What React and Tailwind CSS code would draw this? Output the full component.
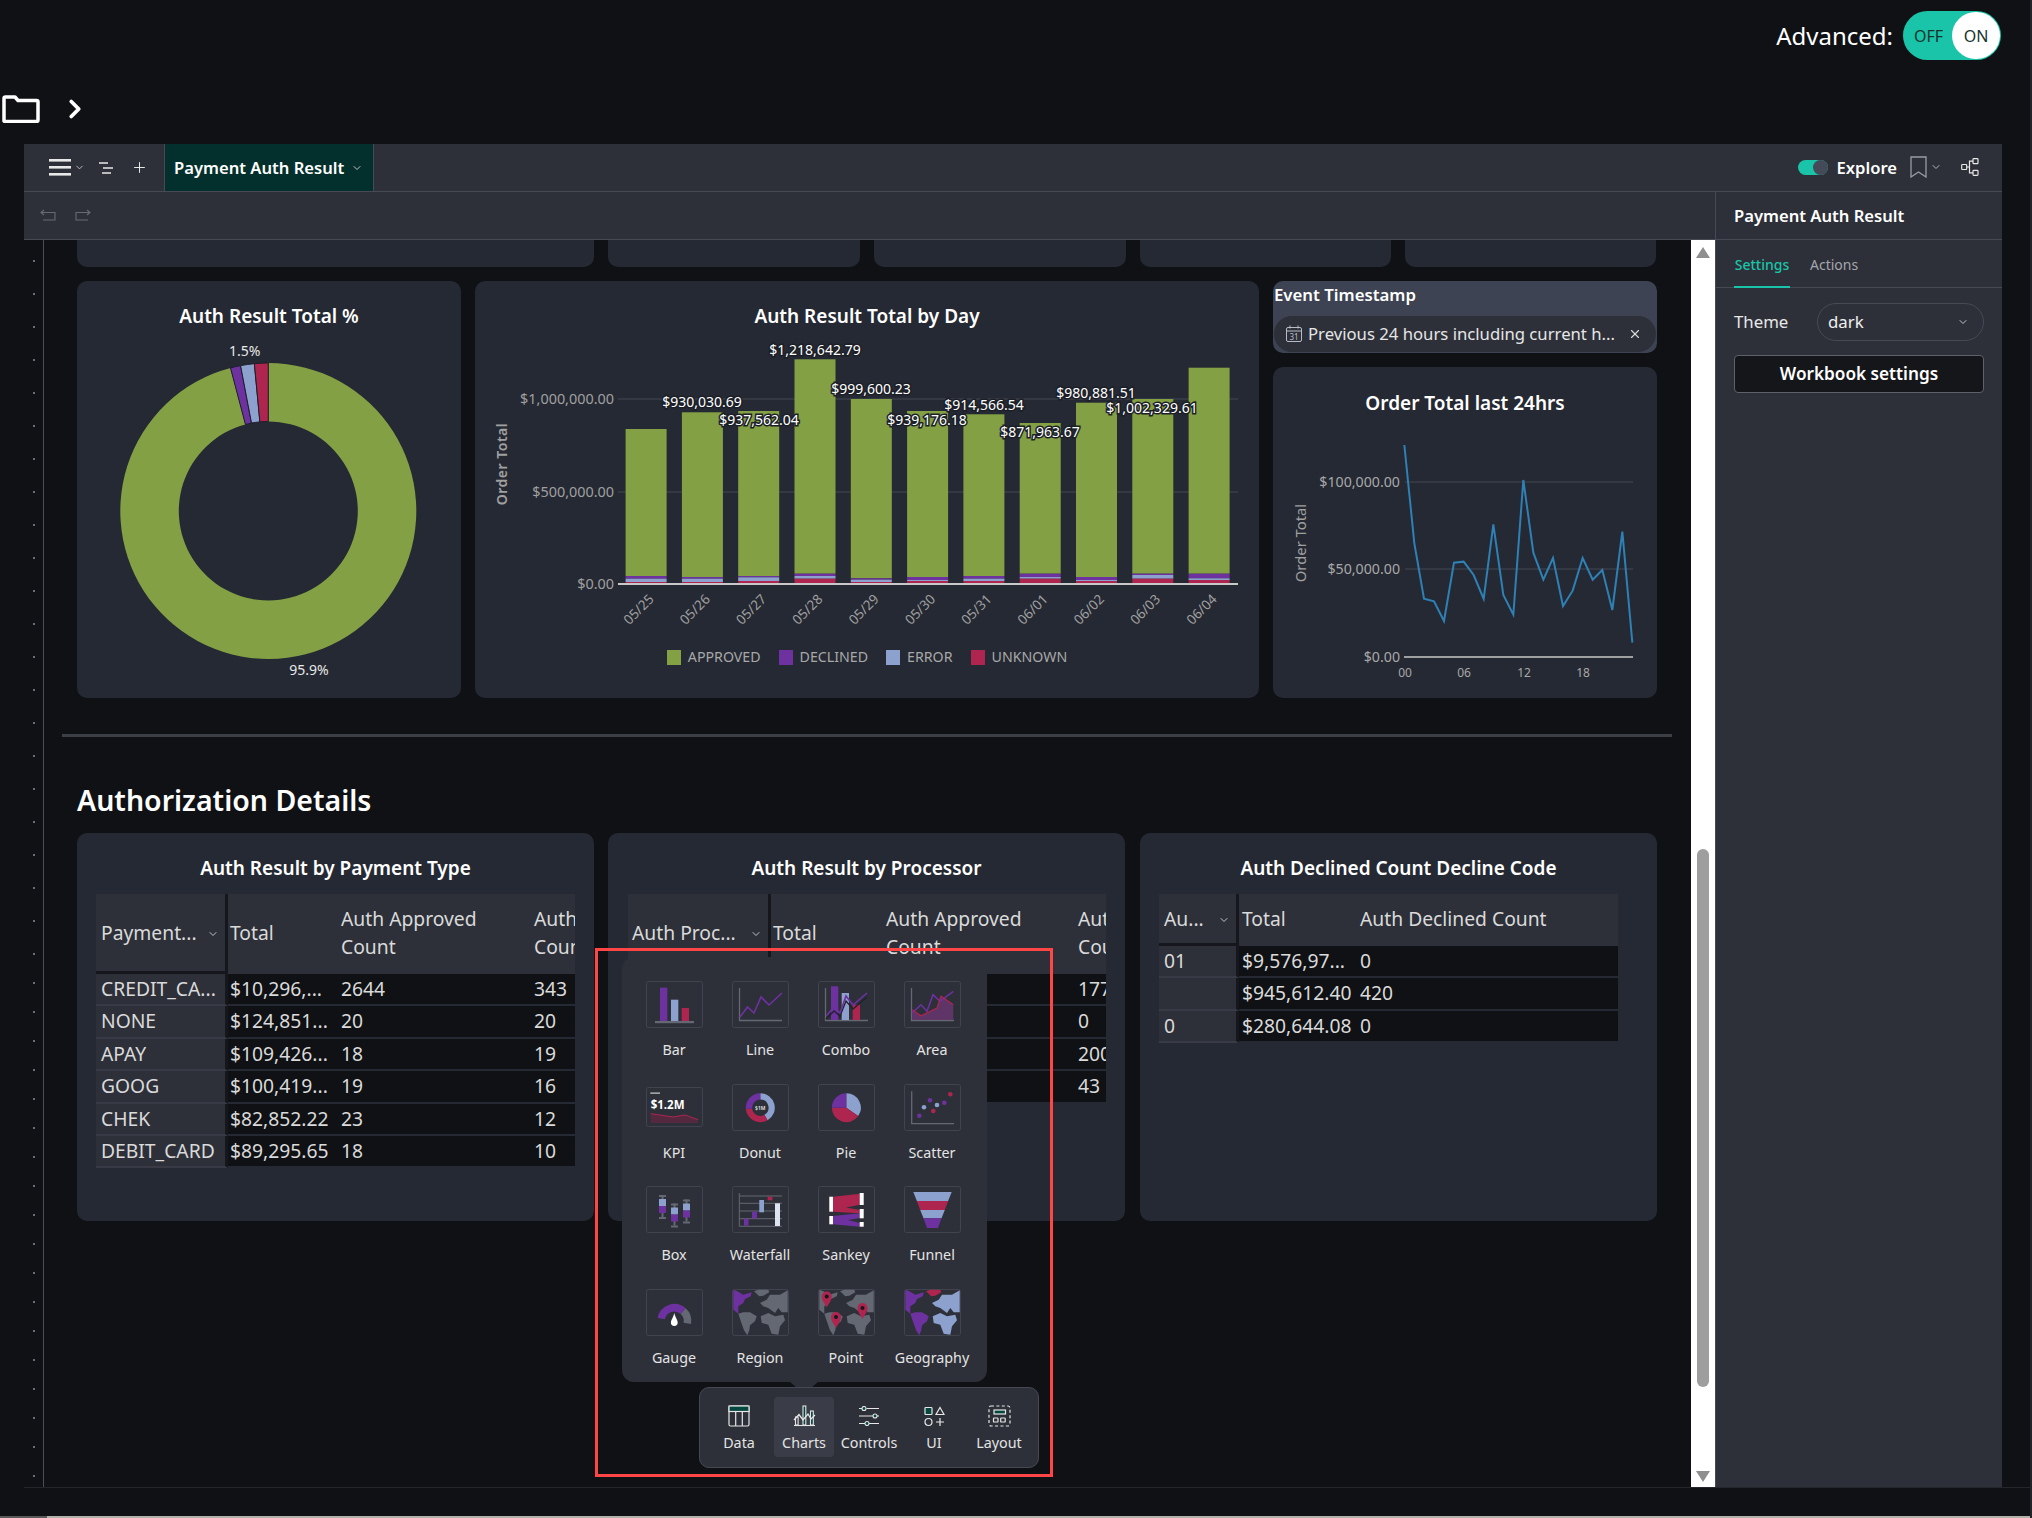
import { ChevronDown, ChevronRight, Plus, X } from 'lucide-react';

const GREEN = '#83a045', PURPLE = '#6e31a0', BLUE = '#8da1cf', RED = '#ae254f', GREY = '#646873';

const BARS = [
  { day: '05/25', top: 429, s: [576, 578.7, 582] },
  { day: '05/26', top: 412.3, s: [577, 578.7, 582] },
  { day: '05/27', top: 411, s: [576, 577.3, 581] },
  { day: '05/28', top: 359.3, s: [573.7, 576, 578.7] },
  { day: '05/29', top: 399, s: [578.3, 579.7, 582] },
  { day: '05/30', top: 411, s: [577, 580, 581] },
  { day: '05/31', top: 414.3, s: [576, 578.7, 581] },
  { day: '06/01', top: 423, s: [573.7, 577, 578.7] },
  { day: '06/02', top: 402.7, s: [577, 580, 581] },
  { day: '06/03', top: 399, s: [573.7, 575, 578.7] },
  { day: '06/04', top: 367.7, s: [573.7, 578.3, 580] },
];

const BAR_LABELS = [
  ['$930,030.69', 702, 402.3], ['$937,562.04', 759, 420.3], ['$1,218,642.79', 815, 350],
  ['$999,600.23', 871, 389], ['$939,176.18', 927, 420.3], ['$914,566.54', 984, 405.3],
  ['$871,963.67', 1040, 432.3], ['$980,881.51', 1096, 393.3], ['$1,002,329.61', 1152, 408.3],
];

const LINE_POINTS = [
  [433, 525], [463, 820], [492, 986], [522, 994], [552, 1053], [582, 878], [611, 875], [641, 915],
  [671, 987], [700, 763], [730, 975], [760, 1034], [790, 630], [820, 848], [850, 929], [879, 864],
  [909, 1008], [938, 962], [968, 864], [998, 929], [1027, 900], [1057, 1020], [1087, 785], [1117, 1118],
].map(([x, y]) => `${1260 + x / 3},${270 + y / 3}`).join(' ');

const polar = (cx, cy, r, deg) => {
  const a = ((deg - 90) * Math.PI) / 180;
  return [cx + r * Math.cos(a), cy + r * Math.sin(a)];
};

// ring slice, angles clockwise from 12 o'clock
const ringSlice = (cx, cy, r1, r2, from, to) => {
  const [ax, ay] = polar(cx, cy, r2, from);
  const [bx, by] = polar(cx, cy, r2, to);
  const [cx2, cy2] = polar(cx, cy, r1, to);
  const [dx, dy] = polar(cx, cy, r1, from);
  const big = to - from > 180 ? 1 : 0;
  return `M${ax} ${ay}A${r2} ${r2} 0 ${big} 1 ${bx} ${by}L${cx2} ${cy2}A${r1} ${r1} 0 ${big} 0 ${dx} ${dy}Z`;
};

const Card = ({ className = '', children }) => (
  <div className={`rounded-[10px] bg-[#252933] ${className}`}>{children}</div>
);

const Title = ({ children }) => (
  <h3 className="text-center text-[19px] leading-6 font-semibold text-white">{children}</h3>
);

const DonutCard = () => (
  <Card className="h-[417px] w-[384px] pt-[23px]">
    <Title>Auth Result Total %</Title>
    <svg viewBox="77 328 384 370" className="block h-[370px] w-[384px]">
      <path d={ringSlice(268.3, 511, 89.5, 148, 0, 345.2)} fill={GREEN} />
      <path d={ringSlice(268.3, 511, 89.5, 148, 345.2, 349.2)} fill={PURPLE} stroke="#1c1f27" />
      <path d={ringSlice(268.3, 511, 89.5, 148, 349.2, 354.6)} fill={BLUE} stroke="#1c1f27" />
      <path d={ringSlice(268.3, 511, 89.5, 148, 354.6, 360)} fill={RED} stroke="#1c1f27" />
      <text x="244.6" y="356" textAnchor="middle" fontSize="14" fill="#e8e8e8">1.5%</text>
      <text x="309" y="675" textAnchor="middle" fontSize="14" fill="#e8e8e8">95.9%</text>
    </svg>
  </Card>
);

const LegendItem = ({ color, label }) => (
  <div className="flex items-center gap-[7px]">
    <span className="h-[15px] w-[14px]" style={{ background: color }} />
    <span className="text-[14.2px] leading-4 text-[#a8a8a8]">{label}</span>
  </div>
);

const BarCard = () => (
  <Card className="h-[417px] w-[784px] pt-[23px]">
    <Title>Auth Result Total by Day</Title>
    <svg viewBox="475 328 784 320" className="block h-[320px] w-[784px]">
      <line x1="618" x2="1238" y1="399" y2="399" stroke="#3a3e49" strokeWidth="1.5" />
      <line x1="618" x2="1238" y1="492" y2="492" stroke="#3a3e49" strokeWidth="1.5" />
      {[['$1,000,000.00', 404], ['$500,000.00', 497], ['$0.00', 589]].map(([t, y]) => (
        <text key={t} x="614" y={y} textAnchor="end" fontSize="14.400" fill="#a0a0a0">{t}</text>
      ))}
      <text transform="translate(507 464) rotate(-90)" textAnchor="middle" fontSize="14" fontWeight="600" letterSpacing="0.5" fill="#a0a0a0">Order Total</text>
      {BARS.map((b, i) => {
        const x = 625.6 + i * 56.3;
        return (
          <g key={b.day}>
            <rect x={x} y={b.top} width="41" height={b.s[0] - b.top} fill={GREEN} />
            <rect x={x} y={b.s[0]} width="41" height={b.s[1] - b.s[0]} fill={PURPLE} />
            <rect x={x} y={b.s[1]} width="41" height={b.s[2] - b.s[1]} fill={BLUE} />
            <rect x={x} y={b.s[2]} width="41" height={584 - b.s[2]} fill={RED} />
            <text transform={`translate(${x + 29} 600) rotate(-45)`} textAnchor="end" fontSize="13.500" fill="#a0a0a0">{b.day}</text>
          </g>
        );
      })}
      <line x1="618" x2="1238" y1="584" y2="584" stroke="#c8c8c8" strokeWidth="2" />
      {BAR_LABELS.map(([t, x, y]) => (
        <text key={t} x={x} y={y + 5} textAnchor="middle" fontSize="14" fill="#fff" stroke="#1c1f27" strokeWidth="3" paintOrder="stroke">{t}</text>
      ))}
    </svg>
    <div className="mt-[1px] flex justify-center gap-[18px]">
      <LegendItem color={GREEN} label="APPROVED" />
      <LegendItem color={PURPLE} label="DECLINED" />
      <LegendItem color={BLUE} label="ERROR" />
      <LegendItem color={RED} label="UNKNOWN" />
    </div>
  </Card>
);

const LineCard = () => (
  <Card className="h-[331px] w-[384px] pt-6">
    <Title>Order Total last 24hrs</Title>
    <svg viewBox="1273 415 384 283" className="block h-[283px] w-[384px]">
      <line x1="1405" x2="1633" y1="482" y2="482" stroke="#3a3e49" strokeWidth="1.5" />
      <line x1="1405" x2="1633" y1="569" y2="569" stroke="#3a3e49" strokeWidth="1.5" />
      <line x1="1404" x2="1633" y1="657" y2="657" stroke="#c8c8c8" strokeWidth="1.5" />
      {[['$100,000.00', 487], ['$50,000.00', 574], ['$0.00', 662]].map(([t, y]) => (
        <text key={t} x="1400" y={y} textAnchor="end" fontSize="14.200" fill="#a8a8a8">{t}</text>
      ))}
      <text transform="translate(1306 543) rotate(-90)" textAnchor="middle" fontSize="14.800" fill="#a0a0a0">Order Total</text>
      {[['00', 1405], ['06', 1464], ['12', 1524], ['18', 1583]].map(([t, x]) => (
        <text key={t} x={x} y="677" textAnchor="middle" fontSize="12" fill="#a8a8a8">{t}</text>
      ))}
      <polyline points={LINE_POINTS} fill="none" stroke="#2e80b5" strokeWidth="2" />
    </svg>
  </Card>
);

const CalendarIcon = () => (
  <svg width="18" height="18" viewBox="0 0 18 18" fill="none" stroke="#b8bcc6" strokeWidth="1">
    <rect x="1.5" y="2.5" width="15" height="14" rx="1.5" />
    <path d="M1.5 6h15M5 .5v3M13 .5v3" />
    <text x="9" y="14.5" textAnchor="middle" fontSize="8" fill="#b8bcc6" stroke="none">31</text>
  </svg>
);

const EventCard = () => (
  <div className="h-[72px] w-[384px] rounded-[10px] bg-[#3d4352] pt-[2px]">
    <div className="pl-[1px] text-[16.8px] leading-6 font-semibold text-white">Event Timestamp</div>
    <div className="mx-[1px] mt-[9px] flex h-[36px] items-center rounded-full bg-[#2d3039] pr-[14px] pl-[11px]">
      <CalendarIcon />
      <span className="ml-[5px] flex-1 text-[16.7px] whitespace-nowrap text-[#e6e6e6]">Previous 24 hours including current h...</span>
      <X size={14} className="text-[#d8d8d8]" />
    </div>
  </div>
);

const DataTable = ({ width, headH, frozen, cols, rows }) => (
  <div className="mt-[14px] overflow-hidden text-[19.3px] text-[#dadada]" style={{ width }}>
    <div className="flex bg-[#2d3039]" style={{ height: headH }}>
      <div className="flex shrink-0 items-center justify-between border-r-[3px] border-b-[3px] border-[#15171c] pt-[2px] pr-[6px] whitespace-nowrap" style={{ width: frozen.w, paddingLeft: frozen.pl }}>
        <span>{frozen.label}</span>
        <ChevronDown size={12} className="text-[#c4c4c4]" />
      </div>
      {cols.map((c) => (
        <div key={c.label} className="flex shrink-0 items-center overflow-hidden pb-[2px] leading-7" style={{ width: c.w, paddingLeft: c.pl }}>
          <span className="block shrink-0" style={{ width: c.textW }}>{c.label}</span>
        </div>
      ))}
    </div>
    {rows.map((r, i) => (
      <div key={i} className="flex h-[32.4px] leading-[30px] whitespace-nowrap">
        <div className="shrink-0 border-r-[3px] border-b-2 border-r-[#15171c] border-b-[#383b45] bg-[#2d3039]" style={{ width: frozen.w, paddingLeft: frozen.pl }}>{r[0]}</div>
        {cols.map((c, j) => (
          <div key={c.label} className="shrink-0 overflow-hidden border-b-2 border-[#252933] bg-[#0f1115]" style={{ width: c.w, paddingLeft: c.pl }}>{r[j + 1]}</div>
        ))}
      </div>
    ))}
  </div>
);

const TABLE_ONE = [
  ['CREDIT_CA...', '$10,296,...', '2644', '343'],
  ['NONE', '$124,851...', '20', '20'],
  ['APAY', '$109,426...', '18', '19'],
  ['GOOG', '$100,419...', '19', '16'],
  ['CHEK', '$82,852.22', '23', '12'],
  ['DEBIT_CARD', '$89,295.65', '18', '10'],
];

const TABLE_TWO = [
  ['', '', '', '177'],
  ['', '', '', '0'],
  ['', '', '', '200'],
  ['', '', '', '43'],
];

const TABLE_THREE = [
  ['01', '$9,576,97...', '0'],
  ['', '$945,612.40', '420'],
  ['0', '$280,644.08', '0'],
];

const axis = 'M7.5 7v32.5H50';
const axisStroke = { stroke: GREY, strokeWidth: 1.3, fill: 'none' };

const Frame = ({ y = 0.5, h = 46, children }) => (
  <svg width="57" height="47" viewBox="0 0 57 47" className="block">
    <rect x="0.5" y={y} width="56" height={h} rx="2" fill="none" stroke="#41444e" />
    {children}
  </svg>
);

// continents are shared by the three map tiles
const MAP = {
  north: '1.3,.7 5.3,2.3 11.3,5.7 19.700,3.300 18.700,7.300 13,10 11.300,14 6.300,17.300 6.300,24.700 1.300,20.700',
  south: '6.300,24.700 11.300,23.300 18,23.300 24.700,27.300 23,32.300 18,36.300 17.300,41.300 15.300,46.300 12,41.300 9.700,34.700',
  top: '22,2.300 26.300,.7 36.300,.7 37.300,3.300 31.300,6.700 27.300,7.300 24.700,4.700',
  asia: '28,14 34.700,10.700 38,5.700 48,5.700 55.700,1.300 55.700,23.300 49.700,23.300 46.300,19 43,24 36.300,19 31.300,17.300',
  africa: '28.700,27.300 36.300,24 43,27.300 51.300,25.700 53,31.300 48,37.300 46.300,45.700 39.700,44.700 36.300,35.700 29.700,34',
};

const MapTiles = ({ colors, children }) => (
  <Frame>
    {Object.keys(MAP).map((k) => (
      <polygon key={k} points={MAP[k]} fill={colors[k]} />
    ))}
    {children}
  </Frame>
);

const Pin = ({ x, y }) => (
  <g>
    <path d={`M${x} ${y + 11}C${x - 2} ${y + 7} ${x - 5} ${y + 4} ${x - 5} ${y}A5 5 0 0 1 ${x + 5} ${y}C${x + 5} ${y + 4} ${x + 2} ${y + 7} ${x} ${y + 11}Z`} fill={RED} />
    <circle cx={x} cy={y} r="2" fill="#15171c" />
  </g>
);

const BoxPlot = ({ x, top }) => (
  <g>
    <rect x={x - 1} y={top} width="2" height="22" fill={GREY} />
    <rect x={x - 3.5} y={top} width="7" height="2" fill={GREY} />
    <rect x={x - 3.5} y={top + 22} width="7" height="2" fill={GREY} />
    <rect x={x - 3.5} y={top + 4} width="7" height="7" fill={BLUE} />
    <rect x={x - 3.5} y={top + 11} width="7" height="7" fill={PURPLE} />
  </g>
);

const CHARTS = [
  ['Bar', (
    <Frame>
      <rect x="14" y="6.7" width="7.3" height="33.3" fill={PURPLE} />
      <rect x="25" y="18.7" width="7.3" height="21.3" fill={BLUE} />
      <rect x="35.7" y="27" width="7.3" height="13" fill={RED} />
      <rect x="9" y="40" width="39" height="2.2" fill={GREY} />
    </Frame>
  )],
  ['Line', (
    <Frame>
      <path d={axis} {...axisStroke} />
      <polyline points="8,36 15.5,26 22,32 29,16 37,24 50,12" fill="none" stroke={PURPLE} strokeWidth="1.6" />
    </Frame>
  )],
  ['Combo', (
    <Frame>
      <path d={axis} {...axisStroke} />
      <rect x="13" y="5.3" width="7.3" height="33.7" fill={PURPLE} />
      <rect x="23.7" y="12" width="7.3" height="27" fill={BLUE} />
      <rect x="34.7" y="23.7" width="7.3" height="15.3" fill={RED} />
      <polyline points="8,38 16,30 22,35 28,20 35,28 49,16" fill="none" stroke="#20232b" strokeWidth="1.4" />
      <polyline points="8,35 16,26 22,32 28,15 35,24 49,12" fill="none" stroke={PURPLE} strokeWidth="1.6" />
    </Frame>
  )],
  ['Area', (
    <Frame>
      <path d={axis} {...axisStroke} />
      <polygon points="8,28.7 17,34.7 33,27 37,15.3 49.3,23.7 49.3,39 8,39" fill="#5e3566" />
      <polyline points="8,32 17,23.7 23,30.3 29,13.7 36,20.3 49.3,10.3" fill="none" stroke={PURPLE} strokeWidth="1.5" />
      <polyline points="8,28.7 17,34.7 33,27 37,15.3 49.3,23.7" fill="none" stroke={RED} strokeWidth="1.2" />
    </Frame>
  )],
  ['KPI', (
    <Frame y={3.5} h={39}>
      <rect x="4.3" y="8.3" width="9.7" height="1.7" fill="#a0a0a0" />
      <text x="4.7" y="24.5" fontSize="11.5" fontWeight="700" fill="#fff">$1.2M</text>
      <polygon points="4.7,29.7 27,33 39,31 52,35.7 52,39 4.7,39" fill="#54283e" />
      <polyline points="4.7,29.7 27,33 39,31 52,35.7" fill="none" stroke={RED} strokeWidth="1" />
    </Frame>
  )],
  ['Donut', (
    <Frame>
      <path d={ringSlice(28.3, 23.7, 8.2, 14.5, 0, 150)} fill={BLUE} />
      <path d={ringSlice(28.3, 23.7, 8.2, 14.5, 150, 265)} fill={RED} />
      <path d={ringSlice(28.3, 23.7, 8.2, 14.5, 265, 360)} fill={PURPLE} />
      <text x="28.3" y="25.5" textAnchor="middle" fontSize="5" fontWeight="600" fill="#e8e8e8">$1M</text>
    </Frame>
  )],
  ['Pie', (
    <Frame>
      <path d={`M28.3 23.7L${polar(28.3, 23.7, 14.5, 0)}A14.5 14.5 0 0 1 ${polar(28.3, 23.7, 14.5, 125)}Z`} fill={BLUE} />
      <path d={`M28.3 23.7L${polar(28.3, 23.7, 14.5, 125)}A14.5 14.5 0 0 1 ${polar(28.3, 23.7, 14.5, 270)}Z`} fill={RED} />
      <path d={`M28.3 23.7L${polar(28.3, 23.7, 14.5, 270)}A14.5 14.5 0 0 1 ${polar(28.3, 23.7, 14.5, 360)}Z`} fill={PURPLE} />
    </Frame>
  )],
  ['Scatter', (
    <Frame>
      <path d="M7.7 7.3v32.4H50" {...axisStroke} />
      {[[15.3, 31.7, PURPLE], [26, 16.3, PURPLE], [40.3, 18.7, PURPLE], [20, 23.3, BLUE], [33, 21, BLUE], [29.3, 27, RED], [46.3, 10.3, RED]].map(([x, y, c]) => (
        <circle key={x} cx={x} cy={y} r="2.3" fill={c} />
      ))}
    </Frame>
  )],
  ['Box', (
    <Frame>
      <BoxPlot x={16.5} top={9} />
      <BoxPlot x={28.5} top={17.5} />
      <BoxPlot x={40.5} top={13.5} />
    </Frame>
  )],
  ['Waterfall', (
    <Frame>
      <path d="M7.3 7v33.5M7.3 10H50M7.3 17.3H50M7.3 25H50M7.3 32.7H50M7.3 40.3H50" stroke={GREY} strokeWidth="1" fill="none" />
      <rect x="12" y="32.7" width="4.5" height="7" fill={PURPLE} />
      <rect x="20" y="25.7" width="5" height="6.6" fill={PURPLE} />
      <rect x="27.3" y="14" width="4.7" height="12.3" fill={BLUE} />
      <rect x="35.7" y="10.7" width="4.7" height="3.6" fill={RED} />
      <rect x="43" y="17.3" width="5" height="22.7" fill="#dde3f0" />
    </Frame>
  )],
  ['Sankey', (
    <Frame>
      <path d="M15 10.7L41.7 7.7V18.7L28 21.500L41.7 24V27H36L15 25.7Z" fill={RED} />
      <path d="M15 30L41.7 27.3V32L30 34L41.7 37V40.7L15 38.3Z" fill={PURPLE} />
      <g fill="#fff">
        <rect x="11.3" y="10.7" width="3.7" height="15" />
        <rect x="11.3" y="30" width="3.7" height="8.3" />
        <rect x="41.7" y="7" width="4" height="12" />
        <rect x="41.7" y="23" width="4" height="9.3" />
        <rect x="41.7" y="36" width="4" height="4.7" />
      </g>
    </Frame>
  )],
  ['Funnel', (
    <Frame>
      <polygon points="9.3,6 47.7,6 44.100,15 12.900,15" fill={BLUE} />
      <polygon points="12.900,15 44.100,15 40.800,24 16.200,24" fill={RED} />
      <polygon points="16.200,24 40.800,24 37.500,32.300 19.500,32.300" fill={BLUE} />
      <polygon points="19.500,32.300 37.500,32.300 34,42 23,42" fill={PURPLE} />
    </Frame>
  )],
  ['Gauge', (
    <Frame>
      <path d={ringSlice(28.3, 32, 9.5, 17, -80, 42)} fill={PURPLE} />
      <path d={ringSlice(28.3, 32, 9.5, 17, 42, 100)} fill={GREY} />
      <path d="M28.3 24C29.5 29 31.7 31 31.7 33.6A3.4 3.4 0 0 1 24.9 33.6C24.9 31 27.1 29 28.3 24Z" fill="#fff" />
    </Frame>
  )],
  ['Region', <MapTiles colors={{ north: PURPLE, south: GREY, top: GREY, asia: GREY, africa: GREY }} />],
  ['Point', (
    <MapTiles colors={{ north: GREY, south: GREY, top: GREY, asia: GREY, africa: GREY }}>
      <Pin x={8.7} y={7.5} />
      <Pin x={18} y={28} />
      <Pin x={44.5} y={19} />
    </MapTiles>
  )],
  ['Geography', <MapTiles colors={{ north: PURPLE, south: PURPLE, top: RED, asia: BLUE, africa: BLUE }} />],
];

const DOCK_TEAL = '#05483f';

const DOCK = [
  ['Data', (
    <svg width="22" height="22" viewBox="0 0 22 22" fill="none" stroke="#e6e6e6" strokeWidth="1.2">
      <rect x="1" y="1" width="20" height="20" rx="1.5" />
      <rect x="1" y="1" width="20" height="5.5" fill={DOCK_TEAL} />
      <path d="M7.7 6.5V21M14.3 6.5V21" />
    </svg>
  )],
  ['Charts', (
    <svg width="23" height="22" viewBox="0 0 23 22" fill="none" stroke="#e6e6e6" strokeWidth="1.1">
      <path d="M1 20.5h21" />
      <rect x="2.5" y="12" width="2.6" height="8" />
      <rect x="10" y="1" width="2.8" height="19" fill={DOCK_TEAL} />
      <rect x="17.5" y="6" width="2.8" height="14" fill={DOCK_TEAL} />
      <polyline points="1,15 6,9.5 10,15 15,9 18,14 22,10" strokeWidth="1.3" />
    </svg>
  )],
  ['Controls', (
    <svg width="20" height="20" viewBox="0 0 20 20" fill="none" stroke="#e6e6e6" strokeWidth="1.1">
      <path d="M0 2.5h3M7.5 2.5h12.5M0 10h14M18 10h2M0 17.5h6M10 17.5h10" />
      <circle cx="5" cy="2.5" r="2" fill={DOCK_TEAL} />
      <circle cx="16" cy="10" r="2" fill={DOCK_TEAL} />
      <circle cx="8" cy="17.5" r="2" fill={DOCK_TEAL} />
    </svg>
  )],
  ['UI', (
    <svg width="21" height="21" viewBox="0 0 21 21" fill="none" stroke="#e6e6e6" strokeWidth="1.2">
      <rect x="1" y="1.5" width="7" height="7" rx="0.8" fill={DOCK_TEAL} />
      <path d="M16 1.5L20 8.5H12Z" />
      <circle cx="4.5" cy="16" r="3.5" />
      <path d="M16 12v8M12 16h8" />
    </svg>
  )],
  ['Layout', (
    <svg width="23" height="22" viewBox="0 0 23 22" fill="none" stroke="#e6e6e6" strokeWidth="1.2">
      <rect x="1" y="1" width="21" height="20" rx="2" strokeDasharray="3 2.4" />
      <rect x="6" y="5" width="11.5" height="4" fill={DOCK_TEAL} />
      <rect x="5.5" y="13" width="4.5" height="4" rx="0.6" />
      <rect x="12.7" y="13" width="4.5" height="4" rx="0.6" />
    </svg>
  )],
];

const Popover = () => (
  <div className="absolute top-[957px] left-[622px] h-[425px] w-[365px] rounded-xl bg-[#2d3039] pt-6 pl-[9px]">
    <div className="grid grid-cols-[repeat(4,86px)] auto-rows-[102.67px]">
      {CHARTS.map(([label, icon]) => (
        <div key={label} className="flex flex-col items-center">
          {icon}
          <span className="mt-[14px] text-[14.3px] leading-4 whitespace-nowrap text-[#e4e4e4]">{label}</span>
        </div>
      ))}
    </div>
  </div>
);

const Dock = () => (
  <div className="absolute top-[1387px] left-[699px] flex h-[81px] w-[340px] gap-[5px] rounded-[10px] border border-[#464954] bg-[#2d3039] pt-[9px] pl-[9px]">
    {DOCK.map(([label, icon]) => (
      <div key={label} className={`flex h-[60px] w-[60px] flex-col items-center rounded pt-2 ${label === 'Charts' ? 'bg-[#3a3d47]' : ''}`}>
        <div className="flex h-[22px] items-center">{icon}</div>
        <span className="mt-2 text-[14.3px] leading-4 whitespace-nowrap text-[#e4e4e4]">{label}</span>
      </div>
    ))}
  </div>
);

const FolderIcon = () => (
  <svg width="38" height="28" viewBox="0 0 38 28" fill="none" stroke="#fff" strokeWidth="3.500">
    <path d="M2 26V3.5C2 2.5 2.5 2 3.5 2H13L16 5.5H34.5C35.5 5.5 36 6 36 7V25C36 26 35.500 26.500 34.5 26.500H3.500C2.500 26.500 2 26 2 26Z" strokeLinejoin="round" />
  </svg>
);

const Toolbar = () => (
  <div className="flex h-12 items-center border-b border-[#474a55] bg-[#2d3039]">
    <div className="flex h-full w-[140px] shrink-0 items-center pl-[25px] text-[#e8e8e8]">
      <svg width="22" height="17" viewBox="0 0 22 17" fill="#e8e8e8">
        <rect width="22" height="2.6" />
        <rect y="7" width="22" height="2.600" />
        <rect y="14" width="22" height="2.600" />
      </svg>
      <ChevronDown size={11} className="ml-[3px] text-[#c4c4c4]" />
      <svg width="14" height="12" viewBox="0 0 14 12" fill="none" stroke="#e8e8e8" strokeWidth="1.3" className="ml-[14px]">
        <path d="M0 1h9M4 6h10M3 11h9" />
      </svg>
      <Plus size={17} strokeWidth={1.4} className="ml-[18px]" />
    </div>
    <div className="flex h-full w-[210px] items-center justify-between border-x border-[#474a55] bg-[#03302c] pr-[10px] pl-[9px]">
      <span className="pt-[2px] text-[16.6px] font-semibold whitespace-nowrap text-white">Payment Auth Result</span>
      <ChevronDown size={12} className="text-[#c4c4c4]" />
    </div>
    <div className="ml-auto flex items-center pr-[23px]">
      <div className="flex h-[15px] w-[30px] items-center justify-end rounded-full bg-[#1ac4a8]">
        <span className="h-[15px] w-[15px] rounded-full bg-[#454a58]" />
      </div>
      <span className="ml-[9px] pt-[2px] text-[16.6px] font-semibold text-white">Explore</span>
      <svg width="17" height="22" viewBox="0 0 17 22" fill="none" stroke="#9a9ca3" strokeWidth="1.3" className="ml-[13px]">
        <path d="M1 1h15v20l-7.500-5L1 21Z" />
      </svg>
      <ChevronDown size={12} className="ml-[3px] text-[#b4b4b4]" />
      <svg width="18" height="18" viewBox="0 0 18 18" fill="none" stroke="#e8e8e8" strokeWidth="1.200" className="ml-[19px]">
        <rect x="0.700" y="6.500" width="5" height="5" rx="0.800" />
        <rect x="12" y="0.700" width="5" height="5" rx="0.800" />
        <rect x="12" y="12.300" width="5" height="5" rx="0.800" />
        <path d="M5.700 9H8.500V3.200H12M8.500 9V14.800H12" />
      </svg>
    </div>
  </div>
);

const Ruler = () => (
  <div className="w-5 shrink-0 border-r border-[#4a4d57] pt-[20px] pl-[9px]">
    <div className="flex flex-col gap-[31px]">
      {Array.from({ length: 22 }, (_, i) => <span key={i} className="h-[2px] w-[2px] bg-[#6a6d78]" />)}
    </div>
    <div className="mt-[27px] flex flex-col gap-[27px]">
      {Array.from({ length: 18 }, (_, i) => <span key={i} className="h-[2px] w-[2px] bg-[#6a6d78]" />)}
    </div>
  </div>
);

const Scrollbar = () => (
  <div className="flex w-6 shrink-0 flex-col items-center bg-white pt-[7px] pb-[5px]">
    <svg width="14" height="11" viewBox="0 0 14 11" fill="#8e8e8e"><path d="M7 0L14 11H0Z" /></svg>
    <div className="mt-[591px] h-[538px] w-3 rounded-full bg-[#9e9e9e]" />
    <div className="flex-1" />
    <svg width="14" height="11" viewBox="0 0 14 11" fill="#8e8e8e"><path d="M7 11L14 0H0Z" /></svg>
  </div>
);

const Sidebar = () => (
  <aside className="w-[287px] shrink-0 border-l border-[#474a55] bg-[#2d3039]">
    <div className="flex h-12 items-center border-b border-[#474a55] pt-[2px] pl-[18px] text-[16.6px] font-semibold text-white">Payment Auth Result</div>
    <div className="flex h-12 border-b border-[#474a55] pl-[18px] text-[14px]">
      <div className="flex h-[48px] w-[56px] items-center justify-center border-b-2 border-[#1ac4a8] pt-[2px] font-medium text-[#1ac4a8]">Settings</div>
      <div className="ml-5 flex items-center pt-[2px] text-[#a4a6ac]">Actions</div>
    </div>
    <div className="px-[18px] pt-[15px]">
      <div className="flex items-center">
        <span className="w-[83px] text-[16.8px] text-[#e8e8e8]">Theme</span>
        <div className="flex h-[38px] w-[167px] items-center justify-between rounded-full border border-[#474a55] pr-[14px] pl-[10px] text-[16.8px] text-[#f0f0f0]">
          dark
          <ChevronDown size={12} className="text-[#c4c4c4]" />
        </div>
      </div>
      <button className="mt-[14px] h-[38px] w-[250px] rounded border border-[#5e616c] bg-[#15161a] text-[17.2px] font-semibold text-white">Workbook settings</button>
    </div>
  </aside>
);

export default function App() {
  return (
    <div className="relative h-[1518px] w-[2032px] overflow-hidden border-r-2 border-[#22242a] bg-[#0f1115] font-['Noto_Sans',sans-serif]">
      <header className="h-[144px]">
        <div className="flex items-center justify-end pt-[11px] pr-[29px]">
          <span className="mr-[10px] text-[24px] leading-[49px] text-white">Advanced:</span>
          <div className="relative flex h-[49px] w-[98px] items-center rounded-full bg-[#1ac4a8] pl-[11px] text-[16px] text-[#14342e]">
            OFF
            <span className="absolute top-[1px] right-[1px] flex h-[47px] w-[48px] items-center justify-center rounded-full bg-white text-[#14342e]">ON</span>
          </div>
        </div>
        <div className="mt-[34px] flex items-center pl-[2px]">
          <FolderIcon />
          <ChevronRight size={30} strokeWidth={3} className="ml-[20px] text-white" />
        </div>
      </header>

      <div className="ml-6 h-[1343px] w-[1978px]">
        <Toolbar />
        <div className="flex h-[1295px]">
          <div className="flex w-[1691px] shrink-0 flex-col">
            <div className="flex h-12 shrink-0 items-center gap-[19px] border-b border-[#474a55] bg-[#2d3039] pb-[2px] pl-4">
              <svg width="16" height="12" viewBox="0 0 16 12" fill="none" stroke="#666a74" strokeWidth="1.100">
                <path d="M4 1L1 3.500L4 6M1 3.500H15V11H3" />
              </svg>
              <svg width="16" height="12" viewBox="0 0 16 12" fill="none" stroke="#666a74" strokeWidth="1.100">
                <path d="M12 1L15 3.500L12 6M15 3.500H1V11H13" />
              </svg>
            </div>
            <div className="flex flex-1 overflow-hidden">
              <Ruler />
              <main className="flex-1 overflow-hidden pl-[33px]">
                <div className="flex gap-[14px]">
                  {['w-[517px]', 'w-[252px]', 'w-[252px]', 'w-[251px]', 'w-[251px]'].map((w, i) => (
                    <div key={i} className={`h-[27px] rounded-b-[10px] bg-[#252933] ${w}`} />
                  ))}
                </div>
                <div className="mt-[14px] flex gap-[14px]">
                  <DonutCard />
                  <BarCard />
                  <div className="flex flex-col gap-[14px]">
                    <EventCard />
                    <LineCard />
                  </div>
                </div>
                <div className="mt-[36px] -ml-[15px] h-[3px] w-[1610px] bg-[#3d3f46]" />
                <h2 className="mt-[43px] text-[28.5px] leading-10 font-semibold text-white">Authorization Details</h2>
                <div className="mt-[13px] flex gap-[14px]">
                  <Card className="h-[388px] w-[517px] px-[19px] pt-[23px]">
                    <Title>Auth Result by Payment Type</Title>
                    <DataTable
                      width={479}
                      headH={80}
                      frozen={{ label: 'Payment...', w: 132, pl: 5 }}
                      cols={[
                        { label: 'Total', w: 110, pl: 2 },
                        { label: 'Auth Approved Count', w: 193, pl: 3, textW: 170 },
                        { label: 'Auth Declined Count', w: 44, pl: 3, textW: 170 },
                      ]}
                      rows={TABLE_ONE}
                    />
                  </Card>
                  <Card className="h-[388px] w-[517px] px-[20px] pt-[23px]">
                    <Title>Auth Result by Processor</Title>
                    <DataTable
                      width={478}
                      headH={80}
                      frozen={{ label: 'Auth Proc...', w: 143, pl: 4 }}
                      cols={[
                        { label: 'Total', w: 112, pl: 2 },
                        { label: 'Auth Approved Count', w: 192, pl: 3, textW: 170 },
                        { label: 'Auth Declined Count', w: 31, pl: 3, textW: 170 },
                      ]}
                      rows={TABLE_TWO}
                    />
                  </Card>
                  <Card className="ml-[1px] h-[388px] w-[517px] px-[19px] pt-[23px]">
                    <Title>Auth Declined Count Decline Code</Title>
                    <DataTable
                      width={459}
                      headH={52}
                      frozen={{ label: 'Au...', w: 80, pl: 5 }}
                      cols={[
                        { label: 'Total', w: 118, pl: 3 },
                        { label: 'Auth Declined Count', w: 261, pl: 3, textW: 240 },
                      ]}
                      rows={TABLE_THREE}
                    />
                  </Card>
                </div>
              </main>
              <Scrollbar />
            </div>
          </div>
          <Sidebar />
        </div>
      </div>
      <div className="ml-6 h-[29px] border-t border-[#24262c]" />
      <div className="flex h-[2px]">
        <div className="w-[47px] bg-[#5a5a58]" />
        <div className="flex-1 bg-[#b2b2aa]" />
      </div>

      <Popover />
      <svg className="absolute top-[1382px] left-[790px]" width="28" height="6" viewBox="0 0 28 6" fill="#2d3039">
        <path d="M0 0H28L21 6H7Z" />
      </svg>
      <Dock />
      <div className="absolute top-[948px] left-[595px] h-[529px] w-[458px] border-[3px] border-[#ff4545]" />
    </div>
  );
}
